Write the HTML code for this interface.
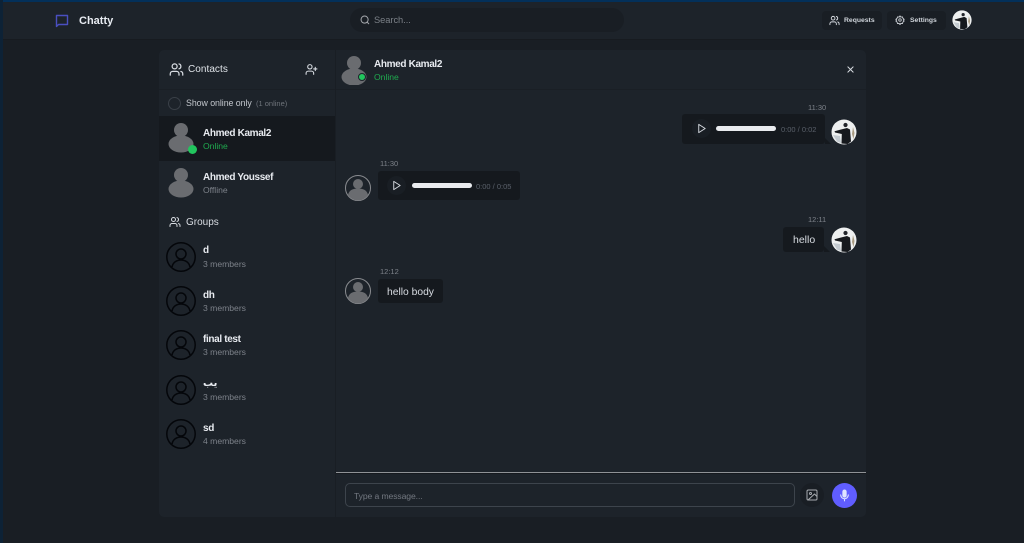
<!DOCTYPE html>
<html><head><meta charset="utf-8">
<style>
*{box-sizing:border-box;margin:0;padding:0}
html,body{width:1024px;height:543px;overflow:hidden;background:#191e24;font-family:"Liberation Sans","Noto Sans CJK SC",sans-serif;color:#e6e9ee}
.a{position:absolute}
.t{position:absolute;white-space:nowrap;line-height:1}
.name{font-size:10px;font-weight:700;color:#e8ebf0;letter-spacing:-.35px}
.sub{font-size:8.6px;color:#7d828a}
.green{color:#1faa4f}
.bub{position:absolute;background:#15191e;border-radius:3px}
.time{font-size:7.5px;color:#7d828a}
svg{position:absolute;display:block}
.ic{fill:none;stroke:#d8dce2;stroke-width:2;stroke-linecap:round;stroke-linejoin:round}
</style></head><body>
<svg width="0" height="0" style="position:absolute"><defs>
<g id="person"><circle cx="20" cy="11" r="7" fill="#6a6c70"/><ellipse cx="20" cy="25" rx="12.5" ry="8.5" fill="#6a6c70"/></g>
<g id="grp" fill="none" stroke="#04060a" stroke-width="1.5"><circle cx="15" cy="15" r="14.2"/><circle cx="15" cy="12" r="5"/><path d="M6 25c1-5 5-7 9-7s8 2 9 7"/></g>
<g id="photo"><circle cx="13" cy="13" r="12.5" fill="#eef0f0"/><path d="M2 16l7 1 1 7-4-1.500z" fill="#c3cad0"/><path d="M10 10.500L16 9l3 1.500 1 12-3.500 2.500-6-.5 .3-9.500L4 13.500 3.500 12.300z" fill="#16191d"/><circle cx="14.500" cy="6" r="2.100" fill="#22252a"/><path d="M22 8l1.500 6-1 6-1.500-5z" fill="#a89a80"/></g>
<g id="users" class="ic"><path d="M16 21v-2a4 4 0 0 0-4-4H6a4 4 0 0 0-4 4v2"/><circle cx="9" cy="7" r="4"/><path d="M22 21v-2a4 4 0 0 0-3-3.870M16 3.130a4 4 0 0 1 0 7.750"/></g>
<g id="play" class="ic"><path d="M6 3l14 9-14 9z"/></g>
</defs></svg>

<!-- frame -->
<div class="a" style="left:0;top:0;width:1024px;height:2px;background:#03305a"></div>
<div class="a" style="left:0;top:0;width:3px;height:543px;background:#0d2236"></div>
<!-- navbar -->
<div class="a" style="left:3px;top:2px;width:1021px;height:38px;background:#1d232a;border-bottom:1px solid #171b20"></div>
<svg style="left:55px;top:14px" width="14" height="14" viewBox="0 0 14 14" fill="none"><path d="M1.500 1.500h11v9h-9l-2 2z" stroke="#4a4fc0" stroke-width="1.400" stroke-linejoin="round"/></svg>
<div class="t" style="left:79px;top:16px;font-size:11px;font-weight:700;color:#e8ecf2">Chatty</div>
<div class="a" style="left:350px;top:8px;width:274px;height:24px;border-radius:12px;background:#191e24"></div>
<svg style="left:360px;top:15px" width="10" height="10" viewBox="0 0 24 24"><g class="ic" style="stroke:#a6a9ae;stroke-width:2.400"><circle cx="11" cy="11" r="8.500"/><path d="M21 21l-4-4"/></g></svg>
<div class="t" style="left:374px;top:16px;font-size:9.300px;letter-spacing:-.05px;color:#7b8087">Search...</div>
<div class="a" style="left:822px;top:11px;width:60px;height:19px;border-radius:4px;background:#191e24"></div>
<svg style="left:829px;top:15px" width="11" height="11" viewBox="0 0 24 24"><use href="#users"/></svg>
<div class="t" style="left:844px;top:18px;font-size:6.800px;font-weight:700;color:#cfd4da">Requests</div>
<div class="a" style="left:887px;top:11px;width:59px;height:19px;border-radius:4px;background:#191e24"></div>
<svg style="left:895px;top:15px" width="10" height="10" viewBox="0 0 24 24"><g class="ic"><circle cx="12" cy="12" r="3"/><path d="M12 2l2 3 4-.5 1 3.500 3 2.500-2 1.500 2 2.500-3 2.500-1 3.500-4-.5-2 3-2-3-4 .5-1-3.500-3-2.500 2-2.500-2-1.500 3-2.500 1-3.500 4 .5z"/></g></svg>
<div class="t" style="left:910px;top:18px;font-size:6.800px;font-weight:700;color:#cfd4da">Settings</div>
<svg style="left:952px;top:10px" width="20" height="20" viewBox="0 0 26 26"><use href="#photo"/></svg>

<!-- panel -->
<div class="a" style="left:159px;top:50px;width:707px;height:467px;background:#1d232a;border-radius:5px"></div>
<div class="a" style="left:335px;top:50px;width:1px;height:467px;background:#191e24"></div>
<div class="a" style="left:159px;top:89px;width:176px;height:1px;background:#1a1f25"></div>
<div class="a" style="left:336px;top:89px;width:530px;height:1px;background:#1a1f25"></div>

<!-- sidebar -->
<svg style="left:169px;top:62px" width="15" height="15" viewBox="0 0 24 24"><use href="#users"/></svg>
<div class="t" style="left:188px;top:65px;font-size:10px;font-weight:400;letter-spacing:.05px;color:#dfe3e8">Contacts</div>
<svg style="left:305px;top:63px" width="13" height="13" viewBox="0 0 24 24"><g class="ic"><path d="M16 21v-2a4 4 0 0 0-4-4H6a4 4 0 0 0-4 4v2"/><circle cx="9" cy="7" r="4"/><path d="M19 8v6M16 11h6"/></g></svg>
<div class="a" style="left:168px;top:97px;width:13px;height:13px;border-radius:50%;border:1px solid #3a4048"></div>
<div class="t" style="left:186px;top:99px;font-size:8.800px;letter-spacing:-.05px;color:#c3c7cd">Show online only</div>
<div class="t" style="left:256px;top:100px;font-size:7.500px;color:#6f747b">(1 online)</div>

<div class="a" style="left:159px;top:116px;width:176px;height:45px;background:#15191e"></div>
<svg style="left:161px;top:119px" width="40" height="40" viewBox="0 0 40 40"><use href="#person"/></svg>
<div class="a" style="left:188px;top:145px;width:9px;height:9px;border-radius:50%;background:#22c55e"></div>
<div class="t name" style="left:203px;top:128.500px">Ahmed Kamal2</div>
<div class="t sub green" style="left:203px;top:142px">Online</div>
<svg style="left:161px;top:164px" width="40" height="40" viewBox="0 0 40 40"><use href="#person"/></svg>
<div class="t name" style="left:203px;top:173px">Ahmed Youssef</div>
<div class="t sub" style="left:203px;top:186px">Offline</div>

<svg style="left:169px;top:216px" width="12" height="12" viewBox="0 0 24 24"><use href="#users"/></svg>
<div class="t" style="left:186px;top:218px;font-size:10px;font-weight:400;color:#d8dce2">Groups</div>

<svg style="left:166px;top:242px" width="30" height="30" viewBox="0 0 30 30"><use href="#grp"/></svg>
<div class="t name" style="left:203px;top:246px">d</div><div class="t sub" style="left:203px;top:260px">3 members</div>
<svg style="left:166px;top:286px" width="30" height="30" viewBox="0 0 30 30"><use href="#grp"/></svg>
<div class="t name" style="left:203px;top:291px">dh</div><div class="t sub" style="left:203px;top:304px">3 members</div>
<svg style="left:166px;top:330px" width="30" height="30" viewBox="0 0 30 30"><use href="#grp"/></svg>
<div class="t name" style="left:203px;top:335px">final test</div><div class="t sub" style="left:203px;top:348px">3 members</div>
<svg style="left:166px;top:375px" width="30" height="30" viewBox="0 0 30 30"><use href="#grp"/></svg>
<div class="t name" style="left:203px;top:379px;font-family:'Liberation Sans','DejaVu Sans',sans-serif">يب</div><div class="t sub" style="left:203px;top:393px">3 members</div>
<svg style="left:166px;top:419px" width="30" height="30" viewBox="0 0 30 30"><use href="#grp"/></svg>
<div class="t name" style="left:203px;top:424px">sd</div><div class="t sub" style="left:203px;top:437px">4 members</div>

<!-- chat head -->
<svg style="left:334px;top:53px" width="40" height="32" viewBox="0 0 40 32"><use href="#person" transform="translate(0,-1)"/></svg>
<div class="a" style="left:358px;top:73px;width:8px;height:8px;border-radius:50%;background:#22c55e;border:1px solid #1d232a"></div>
<div class="t name" style="left:374px;top:59.500px">Ahmed Kamal2</div>
<div class="t sub green" style="left:374px;top:73px">Online</div>
<svg style="left:847px;top:66px" width="7" height="7" viewBox="0 0 8 8"><path d="M1 1l6 6M7 1l-6 6" stroke="#d8dce2" stroke-width="1.100" stroke-linecap="round"/></svg>

<!-- msg 1 -->
<div class="t time" style="left:808px;top:104px">11:30</div>
<div class="bub" style="left:682px;top:114px;width:143px;height:30px"></div>
<svg style="left:822px;top:138px" width="10" height="6" viewBox="0 0 10 6"><path d="M3 0l6 6H3z" fill="#15191e"/></svg>
<div class="a" style="left:692px;top:119px;width:19px;height:19px;border-radius:50%;background:#191e24"></div>
<svg style="left:696px;top:123px" width="11" height="11" viewBox="0 0 24 24"><use href="#play"/></svg>
<div class="a" style="left:716px;top:126px;width:60px;height:5px;border-radius:3px;background:#e9ebee"></div>
<div class="t" style="left:781px;top:126px;font-size:7.500px;color:#5a606a">0:00 / 0:02</div>
<svg style="left:831px;top:119px" width="26" height="26" viewBox="0 0 26 26"><use href="#photo"/></svg>

<!-- msg 2 -->
<div class="t time" style="left:380px;top:160px">11:30</div>
<svg style="left:345px;top:175px" width="26" height="26" viewBox="0 0 26 26"><circle cx="13" cy="13" r="12.500" fill="#1d232a" stroke="#8a8c90"/><circle cx="13" cy="9" r="5" fill="#6a6c70"/><path d="M3 20c1-5 5-6.500 10-6.500s9 1.500 10 6.500a12 12 0 0 1-20 0z" fill="#6a6c70"/></svg>
<div class="bub" style="left:378px;top:171px;width:142px;height:29px"></div>
<div class="a" style="left:387px;top:176px;width:19px;height:19px;border-radius:50%;background:#191e24"></div>
<svg style="left:391px;top:180px" width="11" height="11" viewBox="0 0 24 24"><use href="#play"/></svg>
<div class="a" style="left:412px;top:183px;width:60px;height:5px;border-radius:3px;background:#e9ebee"></div>
<div class="t" style="left:476px;top:183px;font-size:7.500px;color:#5a606a">0:00 / 0:05</div>

<!-- msg 3 -->
<div class="t time" style="left:808px;top:216px">12:11</div>
<div class="bub" style="left:783px;top:227px;width:41px;height:25px"></div>
<svg style="left:821px;top:246px" width="10" height="6" viewBox="0 0 10 6"><path d="M3 0l6 6H3z" fill="#15191e"/></svg>
<div class="t" style="left:793px;top:235px;font-size:10.500px;color:#d8dce2">hello</div>
<svg style="left:831px;top:227px" width="26" height="26" viewBox="0 0 26 26"><use href="#photo"/></svg>

<!-- msg 4 -->
<div class="t time" style="left:380px;top:268px">12:12</div>
<svg style="left:345px;top:278px" width="26" height="26" viewBox="0 0 26 26"><circle cx="13" cy="13" r="12.500" fill="#1d232a" stroke="#8a8c90"/><circle cx="13" cy="9" r="5" fill="#6a6c70"/><path d="M3 20c1-5 5-6.500 10-6.500s9 1.500 10 6.500a12 12 0 0 1-20 0z" fill="#6a6c70"/></svg>
<div class="bub" style="left:378px;top:279px;width:65px;height:24px"></div>
<div class="t" style="left:387px;top:287.500px;font-size:10.300px;color:#d8dce2">hello body</div>

<!-- composer -->
<div class="a" style="left:336px;top:472px;width:530px;height:1px;background:#8f9296"></div>
<div class="a" style="left:336px;top:473px;width:530px;height:1px;background:#15191e"></div>
<div class="a" style="left:345px;top:483px;width:450px;height:24px;border:1px solid #3d444c;border-radius:5px"></div>
<div class="t" style="left:354px;top:491.500px;font-size:8.600px;letter-spacing:-.1px;color:#737881">Type a message...</div>
<div class="a" style="left:800px;top:483px;width:24px;height:24px;border-radius:50%;background:#191e24"></div>
<svg style="left:806px;top:489px" width="12" height="12" viewBox="0 0 24 24"><g class="ic" style="stroke:#a8abb0"><rect x="2" y="2" width="20" height="20" rx="2.500"/><circle cx="9" cy="9" r="2"/><path d="M22 15l-5-5L4 22"/></g></svg>
<div class="a" style="left:832px;top:483px;width:25px;height:25px;border-radius:50%;background:#605dff"></div>
<svg style="left:838px;top:489px" width="13" height="13" viewBox="0 0 24 24"><g class="ic" style="stroke:#dfe4ff"><rect x="9" y="2" width="6" height="13" rx="3" fill="#dfe4ff"/><path d="M5 11a7 7 0 0 0 14 0M12 18v4"/></g></svg>
</body></html>
